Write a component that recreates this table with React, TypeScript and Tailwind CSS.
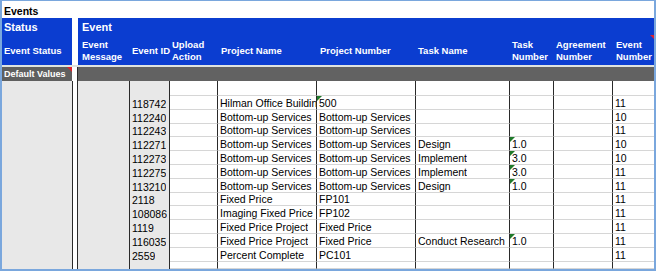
const font = { fontFamily: '"Liberation Sans", Arial, sans-serif' };

type Col = { w: string; grey?: boolean; pl: string; label: string[] };

const cols: Col[] = [
  { w: "w-[52px]", grey: true, pl: "pl-[4px]", label: ["Event", "Message"] },
  { w: "w-[40px]", grey: true, pl: "pl-[2px]", label: ["Event ID"] },
  { w: "w-[48px]", pl: "pl-[2px]", label: ["Upload", "Action"] },
  { w: "w-[99px]", pl: "pl-[3px]", label: ["Project Name"] },
  { w: "w-[99px]", pl: "pl-[3px]", label: ["Project Number"] },
  { w: "w-[94px]", pl: "pl-[2px]", label: ["Task Name"] },
  { w: "w-[44px]", pl: "pl-[2px]", label: ["Task", "Number"] },
  { w: "w-[59px]", pl: "pl-[2px]", label: ["Agreement", "Number"] },
  { w: "flex-1", pl: "pl-[3px]", label: ["Event", "Number"] },
];

type Row = { cells: string[]; marks?: number[] };

const BU = "Bottom-up Services";

const rows: Row[] = [
  { cells: ["", "118742", "", "Hilman Office Building", "500", "", "", "", "11"], marks: [4] },
  { cells: ["", "112240", "", BU, BU, "", "", "", "10"] },
  { cells: ["", "112243", "", BU, BU, "", "", "", "11"] },
  { cells: ["", "112271", "", BU, BU, "Design", "1.0", "", "10"], marks: [6] },
  { cells: ["", "112273", "", BU, BU, "Implement", "3.0", "", "10"], marks: [6] },
  { cells: ["", "112275", "", BU, BU, "Implement", "3.0", "", "11"], marks: [6] },
  { cells: ["", "113210", "", BU, BU, "Design", "1.0", "", "11"], marks: [6] },
  { cells: ["", "2118", "", "Fixed Price", "FP101", "", "", "", "11"] },
  { cells: ["", "108086", "", "Imaging Fixed Price", "FP102", "", "", "", "11"] },
  { cells: ["", "1119", "", "Fixed Price Project", "Fixed Price", "", "", "", "11"] },
  { cells: ["", "116035", "", "Fixed Price Project", "Fixed Price", "Conduct Research", "1.0", "", "11"], marks: [6] },
  { cells: ["", "2559", "", "Percent Complete", "PC101", "", "", "", "11"] },
];

function DataRow({ row, h }: { row?: Row; h: string }) {
  return (
    <div className={`flex ${h}`}>
      {cols.map((c, i) => {
        const last = i === cols.length - 1;
        const text = row ? row.cells[i] : "";
        const mark = row?.marks?.includes(i);
        return (
          <div
            key={i}
            className={`relative flex items-end overflow-hidden whitespace-nowrap ${c.w} ${
              c.grey ? "bg-[#e8e8e8]" : "border-b border-b-[#d6d6d6] bg-white"
            } ${last ? "" : "border-r border-r-[#2a2a2a]"} pl-[2px] text-[10.5px] leading-[12px] text-black`}
          >
            {mark && (
              <div className="absolute left-0 top-0 h-0 w-0 border-t-[5px] border-r-[5px] border-t-[#1f7a2a] border-r-transparent" />
            )}
            <span className="block min-w-0 overflow-hidden">{text}</span>
          </div>
        );
      })}
    </div>
  );
}

export default function App() {
  return (
    <div
      style={font}
      className="flex h-[271px] w-[656px] flex-col overflow-hidden border-b-2 border-l-2 border-r-2 border-t border-[#7aa7dd] bg-white"
    >
      {/* title */}
      <div className="h-[17px] shrink-0 pl-[2px] pt-[4px] text-[10.5px] font-bold leading-[12px] text-black">
        Events
      </div>

      {/* blue header */}
      <div className="flex h-[47px] shrink-0">
        <div className="flex w-[70px] flex-col bg-[#0b3dd0] text-white">
          <div className="h-[19px] pl-[2px] pt-[3px] text-[11px] font-bold leading-[12px]">Status</div>
          <div className="flex flex-1 items-center pl-[2px] text-[9.5px] font-bold leading-[12px]">
            Event Status
          </div>
        </div>
        <div className="w-[6px]" />
        <div className="relative flex flex-1 flex-col bg-[#0b3dd0] text-white">
          <div className="h-[19px] pl-[4px] pt-[3px] text-[11px] font-bold leading-[12px]">Event</div>
          <div className="flex flex-1">
            {cols.map((c, i) => (
              <div
                key={i}
                className={`flex flex-col justify-center ${c.w} ${c.pl} whitespace-nowrap text-[9.5px] font-bold leading-[12px]`}
              >
                {c.label.map((l) => (
                  <span key={l}>{l}</span>
                ))}
              </div>
            ))}
          </div>
          <div className="absolute right-0 top-[17px] h-0 w-0 border-l-[4px] border-t-[4px] border-l-transparent border-t-[#e0202a]" />
        </div>
      </div>

      {/* separator */}
      <div className="h-[2px] shrink-0 bg-[#dfe3df]" />

      {/* grey defaults bar */}
      <div className="flex h-[14px] shrink-0">
        <div className="relative w-[70px] bg-[#5f5f5f] pl-[2px] text-[9px] font-bold leading-[14px] text-white">
          Default Values
          <div className="absolute right-0 top-0 h-0 w-0 border-l-[5px] border-t-[5px] border-l-transparent border-t-[#e0202a]" />
        </div>
        <div className="w-[5px] bg-white" />
        <div className="flex-1 border-l border-l-[#2a2a2a] bg-[#626262]" />
      </div>

      {/* data */}
      <div className="flex min-h-0 flex-1">
        <div className="w-[71px] border-r border-r-[#2a2a2a] bg-[#e8e8e8]" />
        <div className="w-[4px] bg-white" />
        <div className="flex flex-1 flex-col border-l border-l-[#2a2a2a]">
          <DataRow h="h-[15px] shrink-0" />
          {rows.map((r, i) => (
            <DataRow key={i} row={r} h="h-[13.8px] shrink-0" />
          ))}
          <DataRow h="flex-1" />
        </div>
      </div>
    </div>
  );
}
